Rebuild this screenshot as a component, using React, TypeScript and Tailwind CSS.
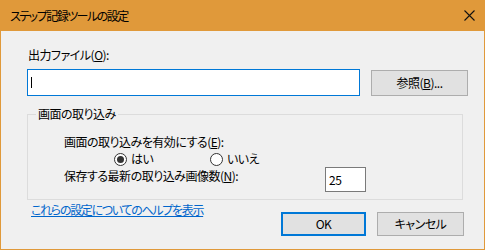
import React from "react";

const Radio = ({ checked, label }: { checked?: boolean; label: string }) => (
  <div className="flex items-center">
    <span className="w-[13px] h-[13px] rounded-full border border-[#333] bg-white flex items-center justify-center">
      {checked && <span className="w-[7px] h-[7px] rounded-full bg-[#333]" />}
    </span>
    <span className="ml-[4px]">{label}</span>
  </div>
);

export default function App() {
  return (
    <div className="w-[485px] h-[250px] bg-[#f0f0f0] border border-t-0 border-[#e0993a] flex flex-col text-[12px] leading-[16px] tracking-[-0.5px] text-black font-['Noto_Sans_CJK_JP',sans-serif] [font-feature-settings:'palt']">
      <div className="h-[31px] shrink-0 bg-[#e0993a] flex items-center justify-between pl-[9px] pr-[9px]">
        <span className="tracking-[-1.5px]">ステップ記録ツールの設定</span>
        <svg width="11" height="11" viewBox="0 0 11 11">
          <path d="M0.5 0.5 L10.5 10.5 M10.5 0.5 L0.5 10.5" stroke="#111" strokeWidth="1.1" />
        </svg>
      </div>

      <div className="pl-[27px] mt-[16px]">
        出力ファイル(<u>O</u>):
      </div>

      <div className="flex items-start mt-[6px] ml-[26px]">
        <div className="w-[333px] h-[27px] bg-white border border-[#0078d7] flex items-center pl-[3px]">
          <span className="w-px h-[11px] bg-black" />
        </div>
        <button className="ml-[11px] mt-[1px] w-[97px] h-[26px] bg-[#e1e1e1] border border-[#adadad] flex items-center justify-center">
          参照(<u>B</u>)...
        </button>
      </div>

      <fieldset className="ml-[26px] mt-[10px] w-[436px] border border-[#dcdcdc] p-0">
        <legend className="ml-[8px] px-[2px]">画面の取り込み</legend>
        <div className="pl-[36px] pt-[12px] pb-[7px]">
          <div>
            画面の取り込みを有効にする(<u>E</u>):
          </div>
          <div className="flex mt-[1px] ml-[50px]">
            <div className="w-[96px]">
              <Radio checked label="はい" />
            </div>
            <Radio label="いいえ" />
          </div>
          <div className="flex items-start">
            <div className="w-[261px] mt-[1px]">
              保存する最新の取り込み画像数(<u>N</u>):
            </div>
            <div className="w-[41px] h-[25px] bg-white border border-[#7a7a7a] flex items-center pl-[3px]">
              25
            </div>
          </div>
        </div>
      </fieldset>

      <div className="flex items-start mr-[20px]">
        <a className="ml-[30px] mt-[2px] flex-1 text-[#0066cc] underline tracking-[-1.3px]">
          これらの設定についてのヘルプを表示
        </a>
        <button className="mt-[12px] w-[85px] h-[24px] bg-[#e1e1e1] border-2 border-[#0078d7] flex items-center justify-center">
          OK
        </button>
        <button className="ml-[11px] mt-[12px] w-[87px] h-[24px] bg-[#e1e1e1] border border-[#adadad] flex items-center justify-center">
          キャンセル
        </button>
      </div>
    </div>
  );
}
